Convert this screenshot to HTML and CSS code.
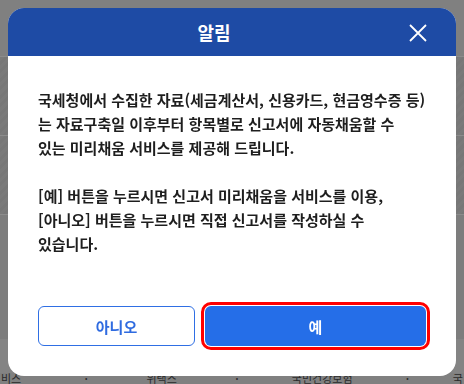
FILE: index.html
```html
<!DOCTYPE html>
<html lang="ko">
<head>
    <meta charset="UTF-8">
    <meta name="viewport" content="width=device-width, initial-scale=1.0">
    <title>알림</title>
    <link rel="stylesheet" href="styles.css">
</head>
<body>
    <!-- page behind the dialog -->
    <div class="page">
        <div class="page-top"></div>
        <div class="page-band"></div>
        <div class="page-band"></div>
        <div class="page-rest"></div>
        <div class="page-foot"></div>
        <ul class="site-links">
            <li class="link-a">비스</li>
            <li class="dot">•</li>
            <li class="link-b">위택스</li>
            <li class="dot">•</li>
            <li class="link-c">국민건강보험</li>
            <li class="dot">•</li>
            <li>국</li>
        </ul>
    </div>

    <div class="overlay">
        <div class="modal">
            <div class="modal-header">
                <h1>알림</h1>
                <button class="close" aria-label="닫기">
                    <svg width="18" height="18" viewBox="0 0 18 18">
                        <path d="M1 1 L17 17 M17 1 L1 17" stroke="#fff" stroke-width="1.8" fill="none"/>
                    </svg>
                </button>
            </div>
            <div class="modal-body">
                <p>국세청에서 수집한 자료(세금계산서, 신용카드, 현금영수증 등)<br>는 자료구축일 이후부터 항목별로 신고서에 자동채움할 수<br>있는 미리채움 서비스를 제공해 드립니다.</p>
                <p>[예] 버튼을 누르시면 신고서 미리채움을 서비스를 이용,<br>[아니오] 버튼을 누르시면 직접 신고서를 작성하실 수<br>있습니다.</p>
            </div>
            <div class="modal-actions">
                <button class="btn btn-no">아니오</button>
                <button class="btn btn-yes">예</button>
            </div>
        </div>
    </div>
</body>
</html>
```

FILE: styles.css
```css
body {
    margin: 0;
    padding: 0;
    font-family: "Noto Sans CJK KR", "Noto Sans", sans-serif;
    background-color: #808080;
    color: #222;
    overflow: hidden;
}

.page {
    height: 384px;
    display: flex;
    flex-direction: column;
}

.page-top {
    height: 56px;
    flex-shrink: 0;
    border-bottom: 1px solid #8c8c8c;
}

.page-band {
    height: 78px;
    flex-shrink: 0;
    border-bottom: 1px solid #8c8c8c;
    background: repeating-linear-gradient(135deg, #7a7a7a 0 3px, #777 3px 6px);
}

.page-rest {
    height: 124px;
    flex-shrink: 0;
    background-color: #7d7d7d;
}

.page-foot {
    height: 34px;
    flex-shrink: 0;
    background-color: #848484;
}

.site-links {
    list-style: none;
    margin: 0;
    padding: 0 1px;
    display: flex;
    justify-content: space-between;
    align-items: center;
    font-size: 11px;
    color: #2a2a2a;
    line-height: 11px;
}

.site-links .link-a {
    width: 40px;
}

.site-links .link-b {
    width: 60px;
    text-align: center;
}

.site-links .link-c {
    width: 80px;
    text-align: center;
}

.site-links .dot {
    font-size: 7px;
}

.overlay {
    position: fixed;
    inset: 0;
    padding: 8px;
}

.modal {
    width: 448px;
    height: 368px;
    background-color: #fff;
    border-radius: 16px;
    overflow: hidden;
    display: flex;
    flex-direction: column;
}

.modal-header {
    position: relative;
    height: 48px;
    background-color: #1e4ba5;
    display: flex;
    align-items: center;
}

.modal-header h1 {
    flex: 1;
    margin: 0;
    padding-right: 36px;
    text-align: center;
    color: #fff;
    font-size: 18px;
    font-weight: 700;
}

.close {
    position: absolute;
    right: 29px;
    top: 16px;
    width: 18px;
    height: 18px;
    padding: 0;
    border: none;
    background: none;
    display: flex;
}

.modal-body {
    flex: 1;
    padding: 32px 30px 0;
}

.modal-body p {
    margin: 0 0 24px;
    font-size: 15px;
    font-weight: 700;
    line-height: 24px;
    white-space: nowrap;
    color: #1e1e1e;
}

.modal-actions {
    display: flex;
    gap: 10px;
    padding: 0 30px 30px;
}

.btn {
    height: 40px;
    border-radius: 6px;
    font-family: inherit;
    font-size: 15px;
    font-weight: 700;
    cursor: pointer;
}

.btn-no {
    width: 157px;
    background-color: #fff;
    border: 1px solid #2f6fe4;
    color: #2f6be0;
}

.btn-yes {
    flex: 1;
    background-color: #256ee8;
    border: none;
    color: #fff;
    outline: 3px solid #f00;
    outline-offset: 1px;
}
```
